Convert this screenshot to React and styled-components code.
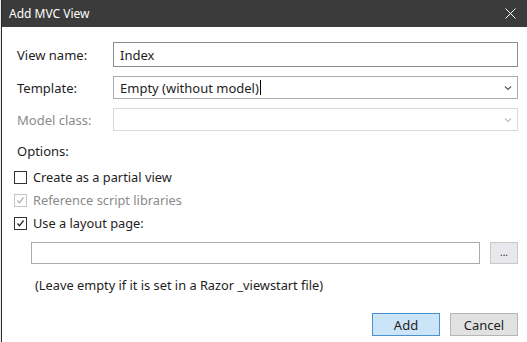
import * as React from "react"
import styled, { createGlobalStyle } from "styled-components"

const GlobalStyle = createGlobalStyle`
  html, body {
    margin: 0;
    padding: 0;
    background: #e8ecef;
  }
  body {
    font-family: "Noto Sans", "Open Sans", "Liberation Sans", sans-serif;
  }
`

const Window = styled.div`
  width: 525px;
  height: 342px;
  margin-left: 1px;
  border-left: 1px solid #2b2b2b;
  background: #ffffff;
  display: flex;
  flex-direction: column;
  font-size: 12.8px;
  color: #1e1e1e;
`

const TitleBar = styled.div`
  height: 27px;
  flex: none;
  background: #3b3b3b;
  color: #ffffff;
  display: flex;
  align-items: center;
  justify-content: space-between;
  padding: 0 11px 0 7px;
  font-size: 12px;
`

const Body = styled.div`
  flex: 1;
  display: flex;
  flex-direction: column;
  padding: 15px 9px 0 15px;
`

const FieldGrid = styled.div`
  display: grid;
  grid-template-columns: 96px 1fr;
  row-gap: 9px;
  align-items: center;
`

const Label = styled.label`
  color: ${({ disabled }) => (disabled ? "#8a8a8a" : "#1e1e1e")};
  font-size: 13px;
  line-height: 16px;
`

const Field = styled.div`
  height: ${({ tall }) => (tall ? "25px" : "23px")};
  box-sizing: border-box;
  border: 1px solid ${({ disabled, focus }) => (disabled ? "#d9d9d9" : focus ? "#8a8d91" : "#a9abae")};
  background: #ffffff;
  display: flex;
  align-items: center;
  padding: 0 5px 0 6px;
  font-size: 13px;
  color: #1e1e1e;
`

const FieldText = styled.span`
  flex: 1;
  display: flex;
  align-items: center;
`

const Caret = styled.span`
  display: inline-block;
  width: 1px;
  height: 15px;
  background: #000;
  margin-left: 1px;
`

const Chevron = ({ color }) => (
  <svg width="8" height="6" viewBox="0 0 8 6">
    <path d="M1 1.5 L4 4.5 L7 1.5" fill="none" stroke={color} strokeWidth="1.1" />
  </svg>
)

const SectionTitle = styled.div`
  margin-top: 12px;
  font-size: 13px;
  line-height: 16px;
`

const CheckList = styled.div`
  margin-top: 10px;
  margin-left: -3px;
  display: flex;
  flex-direction: column;
  gap: 7px;
`

const CheckRow = styled.div`
  display: flex;
  align-items: center;
  gap: 6px;
  height: 16px;
  color: ${({ disabled }) => (disabled ? "#8a8a8a" : "#1e1e1e")};
`

const Box = styled.span`
  width: 13px;
  height: 13px;
  box-sizing: border-box;
  border: 1px solid ${({ disabled }) => (disabled ? "#c4c4c4" : "#333333")};
  background: #ffffff;
  display: flex;
  align-items: center;
  justify-content: center;
`

const Check = ({ color }) => (
  <svg width="9" height="9" viewBox="0 0 9 9">
    <path d="M1.5 4.5 L3.5 6.8 L7.5 1.5" fill="none" stroke={color} strokeWidth="1.3" />
  </svg>
)

const LayoutRow = styled.div`
  margin-top: 11px;
  margin-left: 14px;
  display: flex;
  gap: 10px;
`

const PathInput = styled.div`
  flex: 1;
  height: 22px;
  box-sizing: border-box;
  border: 1px solid #a9abae;
`

const BrowseButton = styled.div`
  width: 28px;
  height: 22px;
  box-sizing: border-box;
  border: 1px solid #c9c9c9;
  background: #e8e8ec;
  display: flex;
  align-items: center;
  justify-content: center;
  font-size: 10px;
  color: #333;
  padding-bottom: 3px;
`

const Hint = styled.div`
  margin-top: 13px;
  margin-left: 18px;
  line-height: 16px;
`

const ButtonRow = styled.div`
  margin-top: 20px;
  display: flex;
  justify-content: flex-end;
  gap: 10px;
`

const Button = styled.div`
  width: 68px;
  height: 23px;
  box-sizing: border-box;
  border: 1px solid ${({ primary }) => (primary ? "#4a90d4" : "#b4b4b4")};
  background: ${({ primary }) => (primary ? "#cce4f7" : "#e1e1e1")};
  display: flex;
  align-items: center;
  justify-content: center;
  font-size: 13px;
  color: #1e1e1e;
`

export default function App() {
  return (
    <>
      <GlobalStyle />
      <Window>
        <TitleBar>
          <span>Add MVC View</span>
          <svg width="11" height="11" viewBox="0 0 11 11">
            <path d="M0.5 0.5 L10.5 10.5 M10.5 0.5 L0.5 10.5" stroke="#ffffff" strokeWidth="1" />
          </svg>
        </TitleBar>
        <Body>
          <FieldGrid>
            <Label>View name:</Label>
            <Field tall focus>
              <FieldText>Index</FieldText>
            </Field>
            <Label>Template:</Label>
            <Field>
              <FieldText>
                Empty (without model)
                <Caret />
              </FieldText>
              <Chevron color="#555" />
            </Field>
            <Label disabled>Model class:</Label>
            <Field disabled>
              <FieldText />
              <Chevron color="#bbb" />
            </Field>
          </FieldGrid>

          <SectionTitle>Options:</SectionTitle>

          <CheckList>
            <CheckRow>
              <Box />
              Create as a partial view
            </CheckRow>
            <CheckRow disabled>
              <Box disabled>
                <Check color="#b0b0b0" />
              </Box>
              Reference script libraries
            </CheckRow>
            <CheckRow>
              <Box>
                <Check color="#222" />
              </Box>
              Use a layout page:
            </CheckRow>
          </CheckList>

          <LayoutRow>
            <PathInput />
            <BrowseButton>...</BrowseButton>
          </LayoutRow>

          <Hint>(Leave empty if it is set in a Razor _viewstart file)</Hint>

          <ButtonRow>
            <Button primary>Add</Button>
            <Button>Cancel</Button>
          </ButtonRow>
        </Body>
      </Window>
    </>
  )
}
